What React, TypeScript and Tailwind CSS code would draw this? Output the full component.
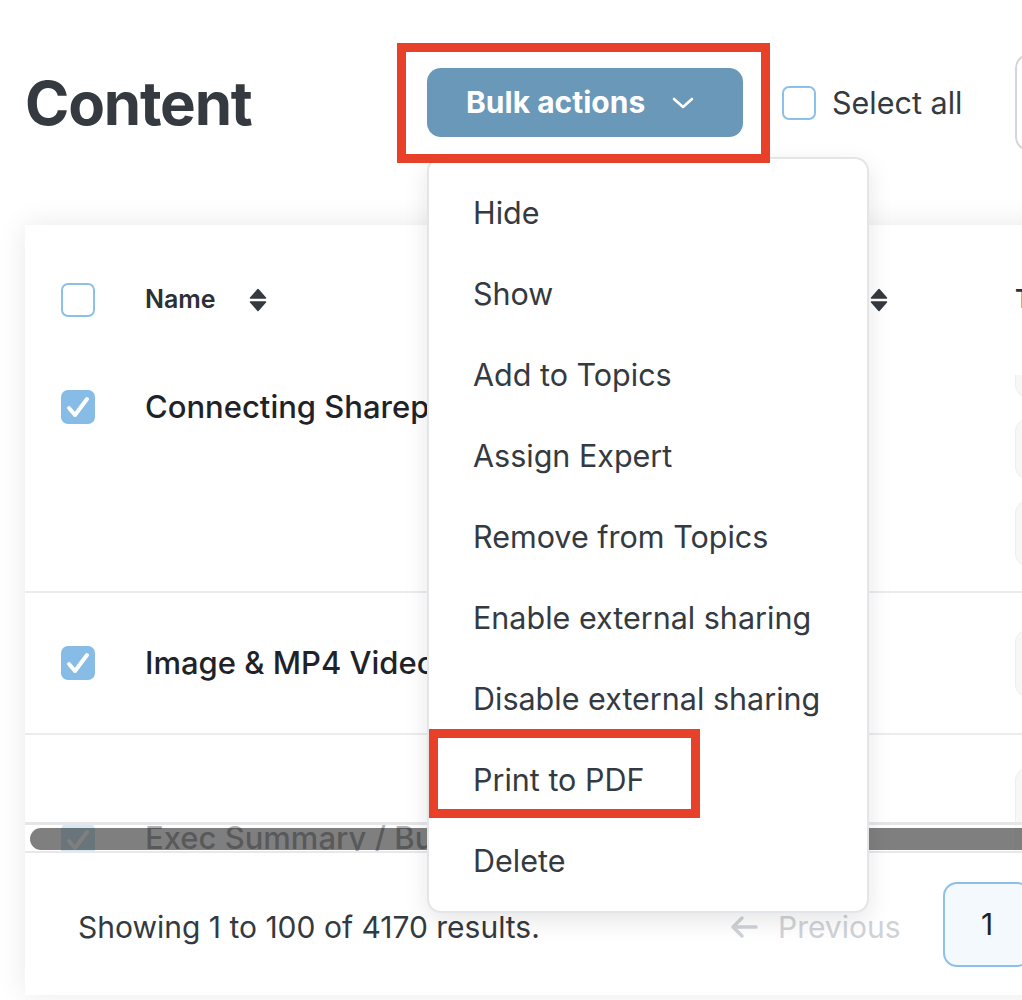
import React from 'react';

const menuItems = [
  'Hide',
  'Show',
  'Add to Topics',
  'Assign Expert',
  'Remove from Topics',
  'Enable external sharing',
  'Disable external sharing',
  'Print to PDF',
  'Delete',
];

function SortIcon() {
  return (
    <svg width="18" height="24" viewBox="0 0 18 24" className="shrink-0">
      <path d="M9 1.5 L16.5 10 H1.5 Z" fill="#343a40" stroke="#343a40" strokeWidth="1.5" strokeLinejoin="round" />
      <path d="M1.5 14 H16.5 L9 22.5 Z" fill="#343a40" stroke="#343a40" strokeWidth="1.5" strokeLinejoin="round" />
    </svg>
  );
}

function Checkbox({ checked }: { checked?: boolean }) {
  if (checked) {
    return (
      <div className="w-[34px] h-[34px] rounded-[7px] bg-[#86bce6] flex items-center justify-center shrink-0">
        <svg width="26" height="26" viewBox="0 0 26 26">
          <path d="M4 14 L10 21 L22 5" fill="none" stroke="white" strokeWidth="4" strokeLinecap="round" strokeLinejoin="round" />
        </svg>
      </div>
    );
  }
  return <div className="w-[34px] h-[34px] rounded-[7px] border-2 border-[#8dc0e9] bg-white shrink-0" />;
}

function Tag({ h, extra = '' }: { h: string; extra?: string }) {
  return <div className={`w-[120px] ${h} bg-[#f7f7f8] border border-[#eeeef0] rounded-[12px] ${extra}`} />;
}

export default function App() {
  return (
    <div className="relative w-[1022px] h-[1000px] overflow-hidden bg-white font-['Inter','Noto_Sans',sans-serif] text-[#343a40]">
      {/* Header */}
      <div className="flex items-center mt-[68px] h-[69px] pl-[25px]">
        <h1 className="w-[402px] shrink-0 text-[60px] font-bold tracking-[-0.02em] leading-none text-[#343a40]">Content</h1>
        <button className="w-[316px] h-[69px] shrink-0 rounded-[14px] bg-[#6a98b8] text-white flex items-center pl-[39px]">
          <span className="text-[30px] font-bold">Bulk actions</span>
          <svg width="24" height="14" viewBox="0 0 24 14" className="ml-[26px]">
            <path d="M3 3 L12 11 L21 3" fill="none" stroke="white" strokeWidth="2.6" strokeLinecap="round" strokeLinejoin="round" />
          </svg>
        </button>
        <div className="ml-[39px]">
          <Checkbox />
        </div>
        <span className="ml-[16px] text-[30.5px] w-[183px] shrink-0">Select all</span>
        <div className="w-[200px] h-[97px] shrink-0 rounded-[14px] border-2 border-[#d2d5da]" />
      </div>

      {/* Table card */}
      <div className="ml-[25px] mt-[88px] w-[1100px] h-[770px] bg-white shadow-[0_0_28px_rgba(0,0,0,0.09)] flex flex-col">
        {/* Column headers */}
        <div className="flex items-center h-[150px] pl-[36px] shrink-0">
          <div className="w-[84px] shrink-0">
            <Checkbox />
          </div>
          <div className="w-[455px] shrink-0 flex items-center">
            <span className="text-[25px] font-semibold text-[#2b3036]">Name</span>
            <span className="ml-[33px]"><SortIcon /></span>
          </div>
          <div className="w-[415px] shrink-0 flex items-center justify-end pr-[127px]">
            <span className="text-[25px] font-semibold text-[#2b3036]">Source</span>
            <span className="ml-[33px]"><SortIcon /></span>
          </div>
          <span className="text-[25px] font-semibold text-[#2b3036]">Tags</span>
        </div>

        {/* Row 1 */}
        <div className="flex items-start h-[218px] pl-[36px] border-b-2 border-[#ececee] shrink-0">
          <div className="w-[84px] shrink-0 mt-[15px]">
            <Checkbox checked />
          </div>
          <div className="w-[455px] shrink-0 mt-[15px] text-[31px] font-medium leading-[34px] text-[#1f2328] whitespace-nowrap">
            Connecting Sharepoint Sites
          </div>
          <div className="w-[415px] shrink-0" />
          <div className="flex flex-col gap-[22px]">
            <Tag h="h-[22px]" extra="rounded-t-none border-t-0" />
            <Tag h="h-[60px]" />
            <Tag h="h-[65px]" />
          </div>
        </div>

        {/* Row 2 */}
        <div className="flex items-center h-[142px] pl-[36px] border-b-2 border-[#ececee] shrink-0">
          <div className="w-[84px] shrink-0">
            <Checkbox checked />
          </div>
          <div className="w-[455px] shrink-0 text-[31px] font-medium leading-[34px] text-[#1f2328] whitespace-nowrap">
            Image &amp; MP4 Video Guide
          </div>
          <div className="w-[415px] shrink-0" />
          <Tag h="h-[67px]" />
        </div>

        {/* Row 3, partly under the horizontal scrollbar */}
        <div className="relative flex items-start h-[118px] pl-[36px] border-b-2 border-[#e8e8ea] overflow-hidden shrink-0">
          <div className="w-[84px] shrink-0 mt-[88px]">
            <Checkbox checked />
          </div>
          <div className="w-[455px] shrink-0 mt-[86px] text-[31px] font-medium leading-[34px] text-[#1f2328] whitespace-nowrap">
            Exec Summary / Business Review
          </div>
          <div className="w-[415px] shrink-0" />
          <div className="mt-[33px]">
            <Tag h="h-[100px]" />
          </div>
          <div className="absolute left-0 right-0 top-[87px] bottom-0 border-t-[3px] border-[#e6e6e8] bg-white/65">
            <div className="mt-[3px] ml-[5px] h-[22px] rounded-l-full bg-black/50" />
          </div>
        </div>

        {/* Footer */}
        <div className="flex items-center flex-1 pl-[53px] pt-[6px]">
          <div className="w-[652px] shrink-0 text-[30px] text-[#343a40] whitespace-nowrap">
            Showing 1 to 100 of 4170 results.
          </div>
          <div className="flex items-center text-[30px] text-[#cfd3d8] w-[213px] shrink-0">
            <svg width="28" height="24" viewBox="0 0 28 24">
              <path d="M26 12 H3 M12 3 L3 12 L12 21" fill="none" stroke="#cfd3d8" strokeWidth="3.5" strokeLinecap="round" strokeLinejoin="round" />
            </svg>
            <span className="ml-[20px]">Previous</span>
          </div>
          <div className="w-[88px] h-[85px] -mt-[6px] rounded-[14px] border-2 border-[#8dc0e9] bg-[#f4f9fd] flex items-center justify-center text-[30px] text-[#1f2328]">
            1
          </div>
        </div>
      </div>

      {/* Dropdown menu */}
      <div className="absolute left-[427px] top-[157px] w-[442px] h-[756px] rounded-[14px] border-2 border-[#e4e5e9] bg-white shadow-[0_8px_24px_rgba(0,0,0,0.10)] pt-[13px]">
        {menuItems.map((item) => (
          <div key={item} className="h-[81px] flex items-center pl-[44px] text-[30.5px] text-[#343a40] whitespace-nowrap">
            {item}
          </div>
        ))}
      </div>

      {/* Annotation boxes */}
      <div className="absolute left-[397px] top-[43px] w-[373px] h-[120px] border-[9px] border-[#e8412a]" />
      <div className="absolute left-[429px] top-[729px] w-[271px] h-[89px] border-[9px] border-[#e8412a]" />
    </div>
  );
}
